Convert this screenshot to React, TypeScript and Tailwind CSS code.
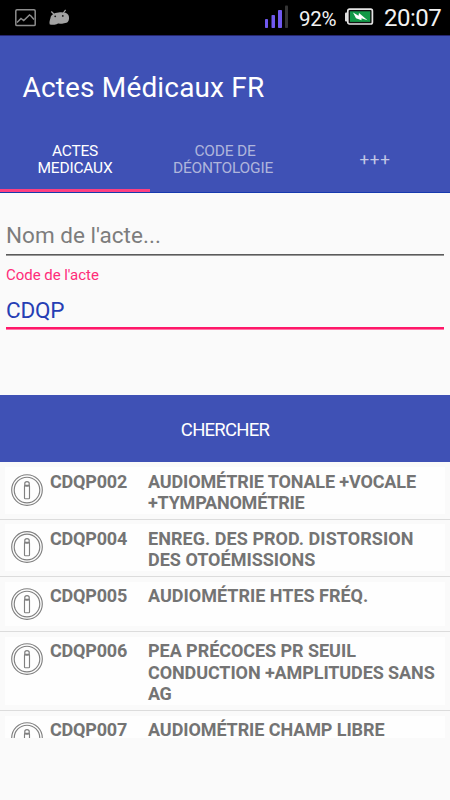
import React from "react";

const rows = [
  {
    code: "CDQP002",
    height: "h-[58px] pt-[5px]",
    lines: [
      { text: "AUDIOMÉTRIE TONALE +VOCALE", spacing: "tracking-[-0.14px]" },
      { text: "+TYMPANOMÉTRIE", spacing: "tracking-[-0.22px]" },
    ],
  },
  {
    code: "CDQP004",
    height: "h-[57px] pt-[4px]",
    lines: [
      { text: "ENREG. DES PROD. DISTORSION", spacing: "tracking-[0.05px]" },
      { text: "DES OTOÉMISSIONS", spacing: "tracking-[0px]" },
    ],
  },
  {
    code: "CDQP005",
    height: "h-[55px] pt-[5px]",
    lines: [{ text: "AUDIOMÉTRIE HTES FRÉQ.", spacing: "tracking-[0px]" }],
  },
  {
    code: "CDQP006",
    height: "h-[79px] pt-[5px]",
    lines: [
      { text: "PEA PRÉCOCES PR SEUIL", spacing: "tracking-[-0.05px]" },
      { text: "CONDUCTION +AMPLITUDES SANS", spacing: "tracking-[-0.1px]" },
      { text: "AG", spacing: "tracking-[-0.4px]" },
    ],
  },
  {
    code: "CDQP007",
    height: "h-[57px] pt-[5px]",
    lines: [{ text: "AUDIOMÉTRIE CHAMP LIBRE", spacing: "tracking-[-0.09px]" }],
  },
];

function InfoIcon() {
  return (
    <svg className="h-8 w-8 shrink-0" viewBox="0 0 32 32" fill="none" stroke="#808080" strokeWidth="1.15">
      <circle cx="16" cy="16" r="15.3" />
      <circle cx="16" cy="16" r="12.8" />
      <circle cx="16" cy="9.9" r="2.3" />
      <rect x="13.5" y="11.4" width="5" height="13.3" rx="0.8" />
    </svg>
  );
}

function StatusBar() {
  return (
    <div className="flex h-[35px] bg-black text-[#f2f2f2]">
      <svg className="mt-[9px] ml-[15px] h-[18px] w-[21px]" viewBox="0 0 21 18" fill="none" stroke="#8d8d8d">
        <rect x="0.8" y="0.8" width="19.4" height="15.8" rx="1.2" strokeWidth="1.5" />
        <path d="M2 13.5 L6 9.5 L8.7 11.5 L14.5 6 L16 7 L19 10.5" strokeWidth="1.5" />
      </svg>
      <svg className="mt-[9px] ml-[13px] h-[17px] w-[21px]" viewBox="0 0 21 17">
        <path d="M4.8 5 L2.3 2.5 M14.3 4 L16.6 0.8" stroke="#a3a3a3" strokeWidth="1.2" />
        <path d="M1.5 9 C2 5.5 5 3.8 9.5 3.4 C14 3 18 3.5 19.4 6 C20.4 8 20.4 11.5 18.5 13.2 C17.3 14.2 15.5 14 14 14.4 C12 15.4 10 13.8 8.5 14.8 C6.5 16.2 3 16 .8 15.4 C0 14 .8 11 1.5 9Z" fill="#a3a3a3" />
        <circle cx="6.2" cy="7.3" r="0.9" fill="#161616" />
        <circle cx="13.8" cy="6.9" r="0.9" fill="#161616" />
      </svg>
      <svg className="mt-[5px] ml-[195px] h-[23px] w-[24px]" viewBox="0 0 24 23">
        <rect x="0" y="14" width="3" height="9" rx="0.8" fill="#7059ef" />
        <rect x="6.5" y="10" width="3.5" height="13" rx="0.8" fill="#7059ef" />
        <rect x="13" y="5" width="4" height="18" rx="0.8" fill="#7059ef" />
        <rect x="20" y="0.5" width="3" height="22.5" rx="0.8" fill="#353535" />
      </svg>
      <div className="mt-[7px] ml-[10px] w-[46px] text-[20.5px] leading-6 tracking-[-0.3px] whitespace-nowrap">92%</div>
      <svg className="mt-[8px] h-[18px] w-[29px]" viewBox="0 0 29 18">
        <rect x="0" y="4.5" width="3" height="9" rx="1" fill="#ddd" />
        <rect x="2.8" y="1.2" width="24.6" height="14.8" rx="1.7" fill="#111" stroke="#e4e4e4" strokeWidth="1.7" />
        <rect x="5" y="3.3" width="20.2" height="10.6" fill="#129947" />
        <path d="M8 4.5 L13.5 7.8 L14 5 L22.5 12.3 L16.5 10.3 L16.5 12.3 L11 10.3Z" fill="white" />
      </svg>
      <div className="mt-[4px] ml-[10px] text-[24px] leading-7 tracking-[-0.5px] whitespace-nowrap">20:07</div>
    </div>
  );
}

export default function App() {
  return (
    <div className="h-[800px] w-[450px] overflow-hidden bg-[#fafafa] font-[Roboto,sans-serif]">
      <StatusBar />
      <header className="h-[158px] border-t border-b border-t-[#25256e] border-b-[#173aae] bg-[#3f51b5]">
        <h1 className="h-[94px] pt-[36px] pl-[22.5px] text-[28px] leading-[32px] tracking-[0.16px] text-white">Actes Médicaux FR</h1>
        <nav className="grid h-[62px] grid-cols-3 text-center text-[15.5px] leading-[17px] tracking-[-0.2px]">
          <div className="border-b-[3px] border-[#ff4081] pt-[13px] text-white">
            <div>ACTES</div>
            <div>MEDICAUX</div>
          </div>
          <div className="pr-[4px] pt-[13px] text-[#afb5dc]">
            <div className="pl-[4px]">CODE DE</div>
            <div>DÉONTOLOGIE</div>
          </div>
          <div className="pt-[21px] text-[17px] tracking-[0.7px] text-[#c2c7e5]">+++</div>
        </nav>
      </header>
      <form className="h-[202px] px-[6px]">
        <div className="h-[61px] pt-[28px] text-[22.5px] leading-7 tracking-[0.03px] text-[#7d7d7d]">Nom de l'acte...</div>
        <div className="h-[2px] border-t border-b border-t-[#5b5b5b] border-b-[#989898]" />
        <div className="h-[33px] pt-[10px] text-[15px] leading-[19px] tracking-[-0.04px] text-[#ff2c79]">Code de l'acte</div>
        <div className="h-[38px] pt-[7px] text-[22.5px] leading-7 tracking-[-0.2px] text-[#263eb4]">CDQP</div>
        <div className="h-[3px] border-t-2 border-b border-t-[#ff1769] border-b-[#ff74a6]" />
      </form>
      <button className="flex h-[67px] w-full items-center justify-center bg-[#3f51b5] pt-[4px] text-[18.5px] tracking-[-0.75px] text-white">CHERCHER</button>
      <div className="h-[276px] overflow-hidden">
        {rows.map((row, index) => (
          <div key={row.code} className={`${row.height} border-b border-[#dcdcdc] px-[5px] pb-[5px]`}>
            <div className="flex h-full bg-[#fefefe] text-[18px] leading-[21.5px] font-bold text-[#747474]">
              <div className={index > 1 ? "mt-[6px] ml-[6px]" : "mt-[7px] ml-[6px]"}>
                <InfoIcon />
              </div>
              <div className={index > 1 ? "mt-[3px] ml-[7px] w-[98px] shrink-0 tracking-[-0.2px]" : "mt-[3.5px] ml-[7px] w-[98px] shrink-0 tracking-[-0.2px]"}>{row.code}</div>
              <div className={index > 1 ? "mt-[3px] whitespace-nowrap" : "mt-[3.5px] whitespace-nowrap"}>
                {row.lines.map((line) => <div key={line.text} className={line.spacing}>{line.text}</div>)}
              </div>
            </div>
          </div>
        ))}
      </div>
    </div>
  );
}
